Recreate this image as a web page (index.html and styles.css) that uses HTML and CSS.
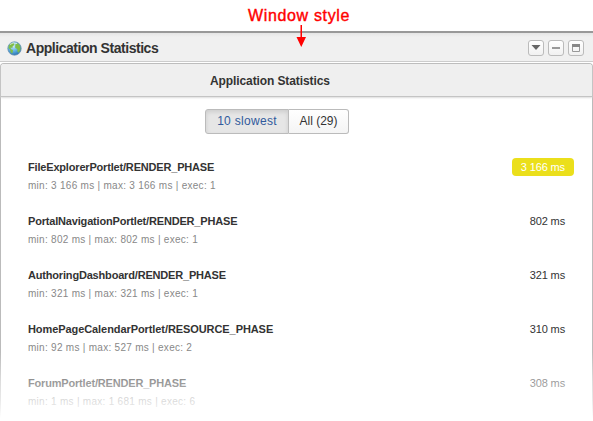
FILE: index.html
```html
<!DOCTYPE html>
<html lang="en">
<head>
<meta charset="utf-8">
<title>Application Statistics</title>
<link rel="stylesheet" href="styles.css">
</head>
<body>
<div class="page">
  <div class="callout">Window style
    <svg class="arrow" width="10" height="23" viewBox="0 0 10 23"><path d="M4.500 0h1.500v12H10L5.250 22 0.500 12H4.500z" fill="#f00"/></svg>
  </div>
  <header class="window-bar">
    <svg class="globe" width="15" height="15" viewBox="0 0 15 15">
      <defs><radialGradient id="sea" cx=".4" cy=".3" r=".7"><stop offset="0" stop-color="#d5edf9"/><stop offset=".55" stop-color="#62b3e4"/><stop offset="1" stop-color="#2a76b4"/></radialGradient></defs>
      <circle cx="7.500" cy="7.500" r="6.700" fill="url(#sea)" stroke="#6b93b2" stroke-width=".8"/>
      <path d="M2 4.200L4.500 2 7 2.200 7.300 4 5.700 5.200 5.400 7 3.500 6.500 4 8.200 6 9 5.400 12.500 3.800 11.500 3 8.600 1.400 7zM8.500 3.200L11 2.200 13.200 5 13.500 8.500 11.800 11.700 10.400 10.500 10.300 8 8.300 7.100 8.200 5.100z" fill="#80bd48"/>
      <path d="M3 3.500q3-2.700 7-1" fill="none" stroke="#e7f6df" stroke-width=".8"/>
    </svg>
    <h1 class="window-title">Application Statistics</h1>
    <div class="controls">
      <button class="control" aria-label="Menu"><svg width="14" height="14"><path d="M2.500 4h9L7 9z" fill="#666"/></svg></button>
      <button class="control" aria-label="Minimize"><svg width="14" height="14"><path d="M3 6h8v2H3z" fill="#999"/></svg></button>
      <button class="control" aria-label="Maximize"><svg width="14" height="14"><path d="M3.500 4.500h7v6h-7z" fill="none" stroke="#999"/><path d="M3 3h8v3H3z" fill="#888"/></svg></button>
    </div>
  </header>
  <main class="panel">
    <h2 class="panel-title"><span>Application Statistics</span></h2>
    <div class="tabs"><button class="tab active"><span>10 slowest</span></button><button class="tab"><span>All (29)</span></button></div>
    <ul class="stats">
      <li class="row"><div><div class="name">FileExplorerPortlet/RENDER_PHASE</div><div class="detail">min: 3 166 ms | max: 3 166 ms | exec: 1</div></div><span class="time slow">3 166 ms</span></li>
      <li class="row"><div><div class="name">PortalNavigationPortlet/RENDER_PHASE</div><div class="detail">min: 802 ms | max: 802 ms | exec: 1</div></div><span class="time">802 ms</span></li>
      <li class="row"><div><div class="name">AuthoringDashboard/RENDER_PHASE</div><div class="detail">min: 321 ms | max: 321 ms | exec: 1</div></div><span class="time">321 ms</span></li>
      <li class="row"><div><div class="name name-long">HomePageCalendarPortlet/RESOURCE_PHASE</div><div class="detail">min: 92 ms | max: 527 ms | exec: 2</div></div><span class="time">310 ms</span></li>
      <li class="row"><div><div class="name">ForumPortlet/RENDER_PHASE</div><div class="detail">min: 1 ms | max: 1 681 ms | exec: 6</div></div><span class="time">308 ms</span></li>
    </ul>
    <div class="fade"></div>
  </main>
</div>
</body>
</html>
```
FILE: styles.css
```css
* { box-sizing: border-box; }
body { margin: 0; background: #fff; font-family: "Liberation Sans", Arial, sans-serif; color: #333; }
h1, h2, ul { margin: 0; padding: 0; list-style: none; }
button { font: inherit; padding: 0; }
.page { width: 593px; height: 421px; overflow: hidden; }
.callout { position: relative; height: 31px; padding: 6px 0 0 248px; font-size: 16px; line-height: 20px; color: #f00; white-space: nowrap; -webkit-text-stroke: .4px #f00; letter-spacing: .65px; }
.arrow { position: absolute; left: 296px; top: 25px; z-index: 2; }
.window-bar { height: 31px; display: flex; align-items: center; padding: 2px 9px 0 7px; background: linear-gradient(#e5e5e5, #f0f0f0 4px); border-top: 2px solid #999; border-bottom: 1px solid #ccc; }
.globe { display: block; margin-right: 4px; }
.window-title { font-size: 14px; line-height: 18px; letter-spacing: -.46px; white-space: nowrap; }
.controls { display: flex; gap: 4px; margin-left: auto; }
.control { width: 16px; height: 16px; border: 1px solid #bbb; border-radius: 3px; background: linear-gradient(#fff, #f1f1f1); }
.control svg { display: block; }
.panel { position: relative; height: 359px; margin-top: 1px; border: 1px solid #bbb; border-bottom: 0; border-radius: 4px 4px 0 0; background: #fff; }
.panel-title { height: 33px; padding-left: 209px; border-bottom: 1px solid #c4c4c4; border-radius: 3px 3px 0 0; background: #efefef; box-shadow: 0 1px 2px #ddd; font-size: 12px; line-height: 34px; letter-spacing: -.1px; }
.tabs { display: flex; width: 144px; height: 25px; margin: 12px 0 0 204px; }
.tab { width: 60px; border: 1px solid #bbb; border-left: 0; border-radius: 0 3px 3px 0; background: linear-gradient(#fff, #f4f4f4); color: #333; font-size: 12px; line-height: 23px; white-space: nowrap; }
.tab.active { width: 84px; border-left: 1px solid #bbb; border-radius: 3px 0 0 3px; background: #e6e6e6; box-shadow: inset 0 2px 4px #ccc; color: #315a9c; letter-spacing: .3px; }
.stats { padding: 24px 18px 0 27px; }
.row { height: 53.900px; display: flex; justify-content: space-between; align-items: flex-start; }
.name { font-size: 11px; font-weight: bold; line-height: 18px; letter-spacing: -.18px; white-space: nowrap; }
.name-long { letter-spacing: -.08px; }
.detail { padding-top: 1px; font-size: 10px; line-height: 18px; letter-spacing: .28px; color: #888; white-space: nowrap; }
.time { padding: 0 9px; font-size: 11px; line-height: 18px; letter-spacing: -.13px; white-space: nowrap; }
.slow { border-radius: 4px; background: #ebdf1b; color: #fff; }
.fade { position: absolute; left: -1px; right: -1px; bottom: 0; height: 70px; background: linear-gradient(rgba(255,255,255,0), rgba(255,255,255,.5) 30px, rgba(255,255,255,.68) 48px, #fff 66px); }
```
